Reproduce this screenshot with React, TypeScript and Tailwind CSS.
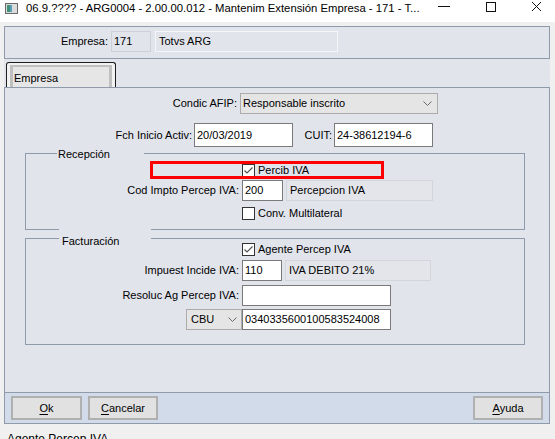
import React from 'react';

const Check = ({ checked }: { checked?: boolean }) => (
  <div className="w-[13px] h-[13px] bg-white border border-[#333] flex items-center justify-center shrink-0">
    {checked && (
      <svg width="11" height="11" viewBox="0 0 11 11">
        <path d="M1.5 5.5 L4 8 L9.5 2.5" fill="none" stroke="#555" strokeWidth="1.2" />
      </svg>
    )}
  </div>
);

const Chevron = () => (
  <svg width="9" height="5" viewBox="0 0 9 5">
    <path d="M0.5 0.5 L4.5 4.5 L8.5 0.5" fill="none" stroke="#6b6b6b" strokeWidth="1" />
  </svg>
);

const Label = ({ text, className }: { text: string; className: string }) => (
  <div className={`text-right text-[11px] text-black shrink-0 whitespace-nowrap ${className}`}>{text}</div>
);

const Input = ({ value, className }: { value?: string; className: string }) => (
  <div className={`bg-white border border-[#7a7a7a] flex items-center pl-[2px] text-[11px] text-black shrink-0 ${className}`}>
    {value}
  </div>
);

const ReadOnly = ({ value, className }: { value: string; className: string }) => (
  <div className={`bg-[#e3e5ea] border border-[#d2d5da] flex items-center pl-[3px] text-[11px] text-black shrink-0 ${className}`}>
    {value}
  </div>
);

const Button = ({ mn, rest, className }: { mn: string; rest: string; className: string }) => (
  <div className={`h-[24px] bg-[#e1e1e1] border-2 border-[#b0b0b0] flex items-center justify-center text-[11px] text-black ${className}`}>
    <span className="underline underline-offset-2">{mn}</span>
    {rest}
  </div>
);

export default function App() {
  return (
    <div className="w-[555px] h-[439px] overflow-hidden bg-[#f0f0f0] flex flex-col font-['Liberation_Sans',Arial,sans-serif] text-black">
      {/* title bar */}
      <div className="h-[22px] bg-white flex items-start shrink-0 relative">
        <svg width="14" height="12" viewBox="0 0 14 12" className="ml-[5px] mt-[3px]">
          <rect x="0.5" y="0.5" width="12" height="10" fill="#dcdcdc" stroke="#6a6a6a" />
          <rect x="2" y="2" width="3" height="7" fill="#3f8f7a" />
          <rect x="5" y="2" width="2" height="7" fill="#5aa0b8" />
        </svg>
        <div className="ml-[7px] mt-[1px] text-[11.3px] leading-[14px] whitespace-nowrap text-black">
          06.9.???? - ARG0004 - 2.00.00.012 - Mantenim Extensión Empresa - 171 - T...
        </div>
        <svg width="13" height="2" viewBox="0 0 13 2" className="absolute left-[438px] top-[6px]">
          <rect x="0" y="0" width="12" height="1" fill="#111" />
        </svg>
        <svg width="11" height="11" viewBox="0 0 11 11" className="absolute left-[485px] top-[1px]">
          <rect x="1.5" y="1.5" width="9" height="9" fill="none" stroke="#111" />
        </svg>
        <svg width="11" height="11" viewBox="0 0 11 11" className="absolute left-[531px] top-[1px]">
          <path d="M1 1 L10 10 M10 1 L1 10" stroke="#111" strokeWidth="1" />
        </svg>
      </div>

      <div className="flex-1 flex flex-col pt-[4px]">
        <div className="ml-[4px] w-[546px] bg-[#e1e4eb] flex flex-col">
          {/* header panel */}
          <div className="h-[33px] border border-[#8f9aaa] flex items-start pt-[4px]">
            <Label text="Empresa:" className="w-[103px] h-[21px] leading-[21px]" />
            <div className="ml-[3px] w-[40px] h-[21px] border border-[#cdd0d6] flex items-center pl-[2px] text-[11px]">171</div>
            <div className="ml-[4px] w-[183px] h-[21px] border border-[#f5f6f8] flex items-center pl-[3px] text-[11px]">Totvs ARG</div>
          </div>

          {/* tab */}
          <div className="mt-[3px] ml-[2px] w-[110px] h-[25px] border border-b-0 border-[#1e1e1e] rounded-t-[3px] bg-[#f2f2f2] pt-[2px] px-[3px] flex">
            <div className="flex-1 border-l-[3px] border-r-[3px] border-t-[2px] border-[#c0c0c0] bg-[#e6e6e6] text-[11px] pl-[1px] pt-[3px]">
              Empresa
            </div>
          </div>

          {/* main panel */}
          <div className="h-[306px] border border-[#8f9aaa] flex flex-col pt-[5px]">
            <div className="flex items-center h-[21px]">
              <Label text="Condic AFIP:" className="w-[232px]" />
              <div className="ml-[3px] w-[198px] h-[21px] bg-[#e5e5e5] border border-[#acacac] flex items-center justify-between pl-[2px] pr-[5px] text-[11px]">
                <span>Responsable inscrito</span>
                <Chevron />
              </div>
            </div>

            <div className="flex items-center h-[24px] mt-[9px]">
              <Label text="Fch Inicio Activ:" className="w-[187px]" />
              <Input value="20/03/2019" className="ml-[2px] w-[99px] h-[24px]" />
              <Label text="CUIT:" className="w-[39px]" />
              <Input value="24-38612194-6" className="ml-[2px] w-[99px] h-[24px]" />
            </div>

            {/* Recepción */}
            <div className="relative mt-[6px] ml-[20px] w-[500px] h-[77px] border border-[#8f9aaa] flex flex-col">
              <div className="absolute left-[31px] -top-[7px] w-[87px] h-[14px] bg-[#e1e4eb] pl-[1px] text-[11px] leading-[14px]">
                Recepción
              </div>
              <div className="flex items-center h-[15px] mt-[9px]">
                <div className="w-[216px] shrink-0" />
                <Check checked />
                <span className="ml-[3px] text-[11px]">Percib IVA</span>
              </div>
              <div className="flex items-center h-[21px] mt-[2px]">
                <Label text="Cod Impto Percep IVA:" className="w-[213px]" />
                <Input value="200" className="ml-[3px] w-[41px] h-[21px]" />
                <ReadOnly value="Percepcion IVA" className="ml-[3px] w-[147px] h-[21px]" />
              </div>
              <div className="flex items-center h-[15px] mt-[5px]">
                <div className="w-[216px] shrink-0" />
                <Check />
                <span className="ml-[3px] text-[11px]">Conv. Multilateral</span>
              </div>
              <div className="absolute left-[124px] top-[7px] w-[234px] h-[18px] border-[3px] border-[#ff0000]" />
            </div>

            {/* Facturación */}
            <div className="relative mt-[8px] ml-[20px] w-[500px] h-[107px] border border-[#8f9aaa] flex flex-col">
              <div className="absolute left-[33px] -top-[10px] w-[92px] h-[20px] bg-[#e1e4eb] pl-[3px] pt-[5px] text-[11px] leading-[14px]">
                Facturación
              </div>
              <div className="flex items-center h-[15px] mt-[3px]">
                <div className="w-[216px] shrink-0" />
                <Check checked />
                <span className="ml-[3px] text-[11px]">Agente Percep IVA</span>
              </div>
              <div className="flex items-center h-[21px] mt-[3px]">
                <Label text="Impuest Incide IVA:" className="w-[213px]" />
                <Input value="110" className="ml-[3px] w-[40px] h-[21px]" />
                <ReadOnly value="IVA DEBITO 21%" className="ml-[3px] w-[146px] h-[21px]" />
              </div>
              <div className="flex items-center h-[21px] mt-[4px]">
                <Label text="Resoluc Ag Percep IVA:" className="w-[213px]" />
                <Input className="ml-[3px] w-[149px] h-[21px]" />
              </div>
              <div className="flex items-center h-[21px] mt-[3px]">
                <div className="w-[160px] shrink-0" />
                <div className="w-[56px] h-[21px] bg-[#e5e5e5] border border-[#acacac] flex items-center justify-between pl-[4px] pr-[4px] text-[11px]">
                  <span>CBU</span>
                  <Chevron />
                </div>
                <Input value="0340335600100583524008" className="w-[149px] h-[21px]" />
              </div>
            </div>
          </div>

          {/* button bar */}
          <div className="h-[31px] border-x border-b border-[#8f9aaa] bg-[#d2dbea] flex items-start pt-[3px] px-[6px]">
            <Button mn="O" rest="k" className="w-[71px]" />
            <Button mn="C" rest="ancelar" className="ml-[6px] w-[70px]" />
            <div className="flex-1" />
            <Button mn="A" rest="yuda" className="w-[70px]" />
          </div>
        </div>

        {/* status strip */}
        <div className="flex-1 overflow-hidden pl-[7px] pt-[8px] text-[12px] leading-[14px] whitespace-nowrap">
          Agente Percep IVA
        </div>
      </div>
    </div>
  );
}
